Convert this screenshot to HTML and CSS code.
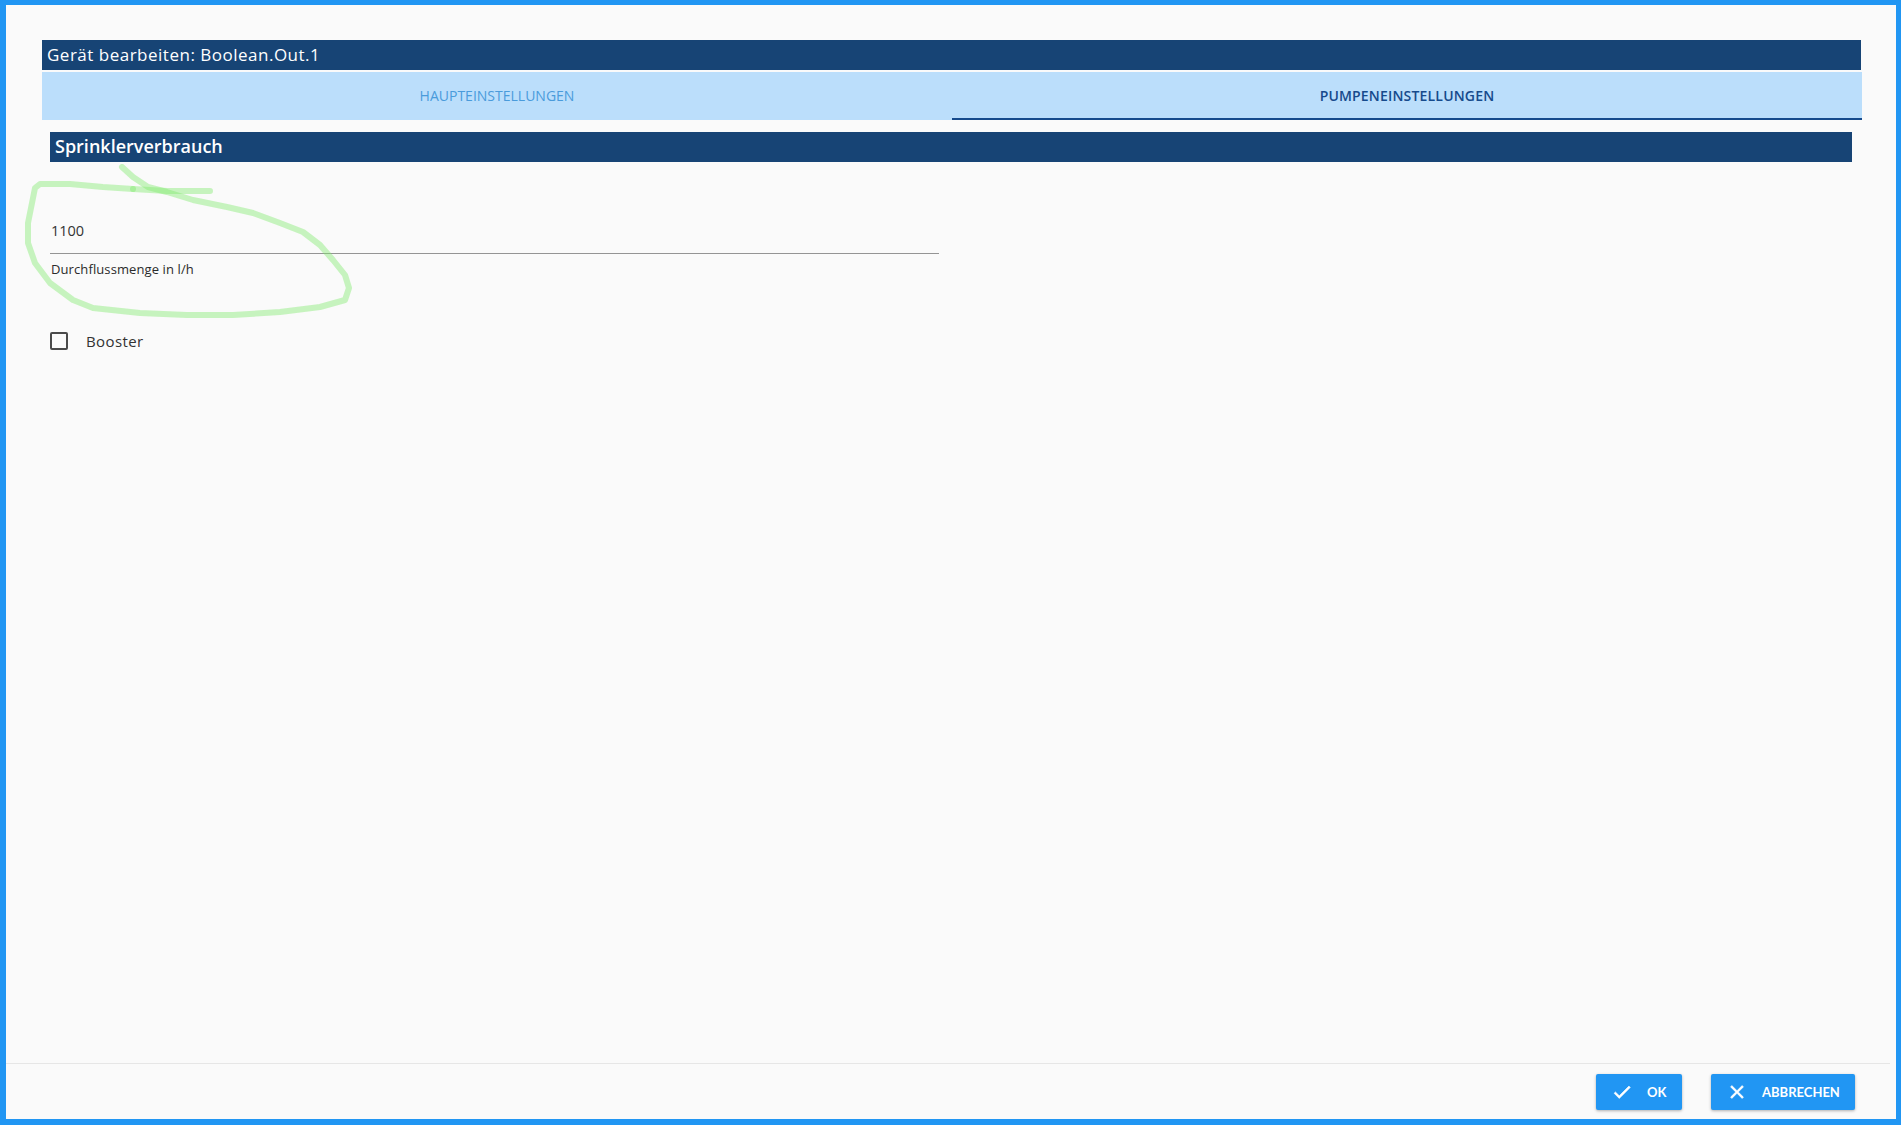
FILE: index.html
```html
<!DOCTYPE html>
<html lang="de">
<head>
<meta charset="utf-8">
<title>Gerät bearbeiten</title>
<link rel="stylesheet" href="styles.css">
</head>
<body>
<div class="dialog">
  <main class="content">
    <h1 class="title">Gerät bearbeiten: Boolean.Out.1</h1>
    <div class="tabs">
      <div class="tab">HAUPTEINSTELLUNGEN</div>
      <div class="tab tab-active">PUMPENEINSTELLUNGEN</div>
    </div>
    <div class="panel">
      <h2 class="section">Sprinklerverbrauch</h2>
      <div class="field">
        <div class="value">1100</div>
        <div class="helper">Durchflussmenge in l/h</div>
      </div>
      <label class="check"><span class="box"></span><span class="check-label">Booster</span></label>
    </div>
  </main>
  <footer class="actions">
    <div class="buttons">
      <button class="btn btn-ok"><svg class="icon" viewBox="0 0 24 24"><path d="M9 16.17 4.83 12l-1.42 1.41L9 19 21 7l-1.41-1.41z"/></svg><span>OK</span></button>
      <button class="btn btn-cancel"><svg class="icon" viewBox="0 0 24 24"><path d="M19 6.41 17.59 5 12 10.59 6.41 5 5 6.41 10.59 12 5 17.59 6.41 19 12 13.41 17.59 19 19 17.59 13.41 12z"/></svg><span>ABBRECHEN</span></button>
    </div>
  </footer>
  <svg class="scribble" viewBox="0 0 400 340" width="400" height="340">
    <path d="M122 167L133 177L148 187L167 192L193 200L227 207L253 213L280 223L303 232L320 245L333 260L345 275L349 288L345 300L320 307L280 312L233 315L187 315L140 313L93 308L73 300L50 283L35 263L28 243L28 223L32 203L35 188L40 184L70 184L103 187L133 189"/>
    <path d="M133 189L167 191L210 191"/>
  </svg>
</div>
</body>
</html>
```
FILE: styles.css
```css
* { box-sizing: border-box; }
html, body { margin: 0; height: 100%; }
body { background: #2196f3; font-family: "Open Sans", "Noto Sans", sans-serif; color: #212121; }
.dialog {
  position: absolute;
  left: 6px; top: 5px; width: 1890px; height: 1114px;
  background: #fafafa;
  display: flex; flex-direction: column;
}
.content { flex: 1; padding: 35px 35px 0 36px; }
.title {
  margin: 0; height: 30px; padding-left: 5px;
  background: #174475; color: #fff;
  font-size: 17px; font-weight: 500; line-height: 30px; letter-spacing: .5px;
}
.tabs { display: flex; margin-top: 2px; height: 48px; background: #bbdefb; width: 1820px; }
.tab {
  flex: 1; display: flex; align-items: center; justify-content: center; padding-bottom: 1px;
  font-size: 14px; font-weight: 400; color: #4a9bdb;
}
.tab-active { color: #164a8c; font-weight: 600; letter-spacing: .18px; padding-bottom: 0; border-bottom: 2px solid #164a8c; }
.panel { padding: 12px 8px 0; }
.section {
  margin: 0; height: 30px; padding-left: 5px; width: 1802px;
  background: #174475; color: #fff;
  font-size: 18px; font-weight: 600; line-height: 28px;
}
.field { width: 889px; margin-top: 58px; }
.value {
  height: 34px; border-bottom: 1px solid #949494; padding: 1px 0 0 1px;
  font-size: 14.5px; line-height: 20px; color: #333;
}
.helper { margin-top: 7px; padding-left: 1px; font-size: 13px; letter-spacing: .1px; line-height: 17px; color: #2b2b2b; }
.check { display: flex; align-items: center; margin-top: 54px; height: 18px; }
.box { width: 18px; height: 18px; border: 2px solid #4a4a4a; border-radius: 2px; }
.check-label { margin-left: 18px; font-size: 15px; letter-spacing: .4px; color: #333; }
.actions { height: 56px; padding: 0 6px 0 0; flex: none; }
.buttons {
  height: 100%; border-top: 1px solid #e6e6e6;
  display: flex; justify-content: flex-end; gap: 29px; padding: 10px 35px 0 0;
}
.btn {
  height: 36px; border: 0; border-radius: 2px; background: #2196f3; color: #fff;
  font-family: Lato, sans-serif; font-size: 13px; font-weight: 700;
  display: flex; align-items: center; padding: 0 16px 0 15px;
  box-shadow: 0 1px 3px rgba(0,0,0,.3);
}
.btn-ok { width: 86px; }
.btn-cancel { width: 144px; }
.icon { width: 22px; height: 22px; fill: #fff; stroke: #fff; stroke-width: .7; margin-right: 14px; flex: none; }
.scribble { position: absolute; left: -6px; top: -5px; pointer-events: none; }
.scribble path { fill: none; stroke: #7fea6c; stroke-opacity: .42; stroke-width: 6; stroke-linecap: round; stroke-linejoin: round; filter: blur(.6px); }
```
